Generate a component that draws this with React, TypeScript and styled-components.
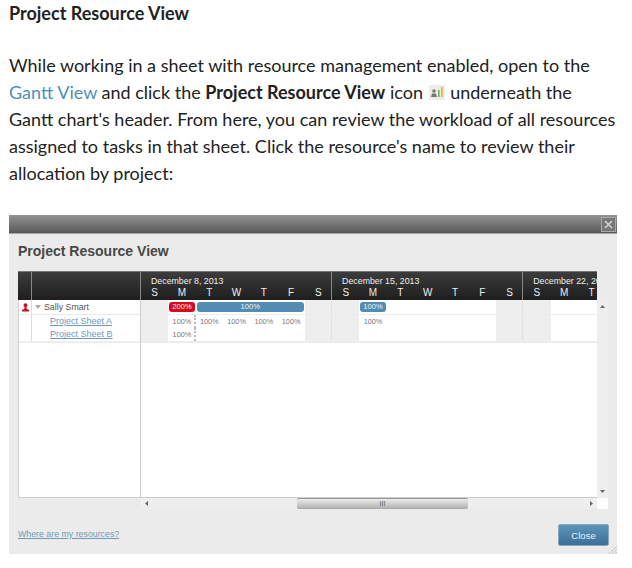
import React from "react";
import styled, { createGlobalStyle } from "styled-components";

const GlobalStyle = createGlobalStyle`
    html, body {
        margin: 0;
        background: white;
    }
`;

const Page = styled.div`
    width: 632px;
    height: 568px;
    overflow: hidden;
    box-sizing: border-box;
    padding: 0 0 0 9px;
    font-family: "Lato", "Liberation Sans", sans-serif;
    color: #222;
`;

const Heading = styled.h2`
    margin: 0;
    padding-top: 3px;
    font-size: 18px;
    line-height: 20px;
    font-weight: 700;
`;

const Paragraph = styled.p`
    margin: 29px 0 0;
    width: 620px;
    font-size: 18px;
    line-height: 27px;
    white-space: nowrap;
`;

const DocLink = styled.span`
    color: #4f8fb5;
`;

const InlineIcon = styled.svg`
    width: 16px;
    height: 15px;
    vertical-align: -1px;
    margin: 0 1px;
`;

const Dialog = styled.div`
    position: relative;
    margin-top: 28px;
    width: 608px;
    height: 339px;
    background: #ebebeb;
    font-family: "Liberation Sans", Arial, sans-serif;
    display: flex;
    flex-direction: column;
`;

const TitleBar = styled.div`
    height: 18px;
    flex: none;
    display: flex;
    justify-content: flex-end;
    align-items: center;
    background: linear-gradient(#939393, #595959);
    border-bottom: 1px solid #a3a3a3;
`;

const CloseX = styled.div`
    width: 13px;
    height: 13px;
    margin-right: 1px;
    display: flex;
    align-items: center;
    justify-content: center;
    background: #777;
    border: 1px solid #a8a8a8;
`;

const DialogBody = styled.div`
    flex: 1;
    padding: 8px 0 0 9px;
    display: flex;
    flex-direction: column;
`;

const DialogTitle = styled.div`
    font-size: 14px;
    line-height: 18px;
    font-weight: 700;
    color: #474747;
    margin-bottom: 11px;
`;

const HeaderRow = styled.div`
    display: flex;
    width: 579px;
    height: 29px;
    background: linear-gradient(#3c3c3c, #1e1e1e);
    border-top: 1px solid #777;
    box-sizing: border-box;
`;

const IconHead = styled.div`
    width: 13px;
    flex: none;
    border-right: 1px solid #888;
`;

const NameHead = styled.div`
    width: 108px;
    flex: none;
    border-right: 1px solid #888;
`;

const WeekStrip = styled.div`
    flex: 1;
    display: flex;
    overflow: hidden;
`;

const Week = styled.div`
    width: 191.1px;
    flex: none;
    box-sizing: border-box;
    border-right: 1px solid #888;
    color: #eee;
`;

const WeekDate = styled.div`
    padding: 4px 0 0 10px;
    font-size: 8.8px;
    line-height: 11px;
    white-space: nowrap;
`;

const DayRow = styled.div`
    display: grid;
    grid-template-columns: repeat(7, 27.3px);
    font-size: 10px;
    line-height: 12px;
    text-align: center;
`;

const BodyArea = styled.div`
    display: flex;
    height: 198px;
`;

const TableBody = styled.div`
    width: 579px;
    display: flex;
    background: white;
    box-sizing: border-box;
    border-left: 1px solid #d4d4d4;
    border-bottom: 1px solid #ccc;
`;

const LeftPane = styled.div`
    width: 122px;
    flex: none;
    box-sizing: border-box;
    border-right: 1px solid #ccc;
`;

const ResourceRow = styled.div`
    height: 15px;
    display: flex;
    align-items: center;
    box-sizing: border-box;
    border-bottom: 1px solid #eaeaea;
    font-size: 8.8px;
    color: #555;
`;

const RowIcon = styled.div`
    width: 13px;
    height: 100%;
    flex: none;
    display: flex;
    align-items: center;
    justify-content: center;
    border-right: 1px solid #ddd;
    box-sizing: border-box;
`;

const Caret = styled.svg`
    width: 6px;
    height: 4px;
    margin: 0 3px 0 3px;
`;

const ProjectRows = styled.div`
    height: 28px;
    box-sizing: border-box;
    border-bottom: 2px solid #eee;
    padding-left: 13px;
    background: linear-gradient(#ddd, #ddd) 12px 0 / 1px 100% no-repeat;
`;

const ProjectLink = styled.div`
    height: 13.4px;
    line-height: 13px;
    padding-left: 18px;
    font-size: 9px;
    color: #6d9ab8;
    text-decoration: underline;
`;

const ChartPane = styled.div`
    flex: 1;
    overflow: hidden;
`;

const Stripes = styled.div`
    width: 456px;
    background: repeating-linear-gradient(
        90deg,
        #eeeeee 0,
        #eeeeee 27.3px,
        white 27.3px,
        white 163.8px,
        #eeeeee 163.8px,
        #eeeeee 190.1px,
        #e2e2e2 190.1px,
        #e2e2e2 191.1px
    );
`;

const ChartGrid = styled.div<{ $height: number; $border: number }>`
    display: grid;
    grid-template-columns: repeat(17, 27.3px);
    grid-auto-rows: 13px;
    height: ${(p) => p.$height}px;
    align-content: start;
    box-sizing: border-box;
    border-bottom: ${(p) => p.$border}px solid #ececec;
`;

const Bar = styled.div<{ $col: number; $span: number; $red?: boolean }>`
    grid-column: ${(p) => p.$col} / span ${(p) => p.$span};
    margin: 2px 1px 1px 1px;
    height: 10px;
    border-radius: 3px;
    background: ${(p) => (p.$red ? "#d8091f" : "#538cb1")};
    color: #f2f2f2;
    font-size: 7.6px;
    line-height: 10px;
    text-align: center;
`;

const Percent = styled.div<{ $col: number; $row: number; $dashed?: boolean }>`
    grid-column: ${(p) => p.$col};
    grid-row: ${(p) => p.$row};
    font-size: 7.3px;
    line-height: 13px;
    text-align: center;
    color: #777;
    ${(p) => (p.$dashed ? "border-right: 2px dotted #bbb; padding-left: 2px;" : "")}
`;

const VerticalTrack = styled.div`
    width: 11px;
    flex: none;
    display: flex;
    flex-direction: column;
    justify-content: space-between;
    align-items: center;
    padding: 4px 0;
    box-sizing: border-box;
    background: #eeeeee;
`;

const HorizontalArea = styled.div`
    display: flex;
    height: 11px;
    width: 590px;
`;

const ScrollGap = styled.div`
    width: 123px;
    flex: none;
`;

const HorizontalTrack = styled.div`
    width: 456px;
    flex: none;
    display: flex;
    align-items: center;
    background: #eeeeee;
`;

const ArrowSlot = styled.div`
    width: 11px;
    flex: none;
    display: flex;
    justify-content: center;
`;

const TrackSpace = styled.div<{ $w: number }>`
    width: ${(p) => p.$w}px;
    flex: none;
`;

const Thumb = styled.div`
    width: 171px;
    height: 11px;
    flex: none;
    box-sizing: border-box;
    border-radius: 2px;
    border-top: 1px solid #999;
    border-bottom: 1px solid #aaa;
    background: linear-gradient(#ececec, #b4b4b4);
    color: #555;
    font-size: 7px;
    line-height: 9px;
    text-align: center;
`;

const ScrollCorner = styled.div`
    width: 11px;
    flex: none;
    background: white;
`;

const Footer = styled.div`
    flex: 1;
    display: flex;
    align-items: flex-start;
    justify-content: space-between;
    width: 591px;
    padding-top: 15px;
`;

const HelpLink = styled.div`
    margin-top: 4px;
    font-size: 8.8px;
    line-height: 12px;
    color: #6d9ab8;
    text-decoration: underline;
`;

const CloseButton = styled.div`
    width: 51px;
    height: 22px;
    box-sizing: border-box;
    border: 1px solid #8aa6b8;
    border-radius: 2px;
    background: linear-gradient(#5c95b8, #3c6f96);
    color: #e2f2f8;
    font-size: 9.6px;
    line-height: 21px;
    text-align: center;
`;

const ResizeGrip = styled.svg`
    position: absolute;
    right: 0;
    bottom: 0;
    width: 8px;
    height: 8px;
`;

const days = ["S", "M", "T", "W", "T", "F", "S"];
const weeks = [
    { label: "December 8, 2013", dayCount: 7 },
    { label: "December 15, 2013", dayCount: 7 },
    { label: "December 22, 2013", dayCount: 3 },
];

function Arrow(props: { dir: "up" | "down" | "left" | "right" }) {
    const points = {
        up: "0,4 2.5,1 5,4",
        down: "0,1 5,1 2.5,4",
        left: "4,0 4,5 1,2.5",
        right: "1,0 1,5 4,2.5",
    }[props.dir];
    return (
        <svg width="5" height="5" viewBox="0 0 5 5">
            <polygon points={points} fill="#666" />
        </svg>
    );
}

export default function App() {
    return (
        <React.Fragment>
            <GlobalStyle />
            <Page>
                <Heading>Project Resource View</Heading>
                <Paragraph>
                    While working in a sheet with resource management enabled, open to the
                    <br />
                    <DocLink>Gantt View</DocLink> and click the <b>Project Resource View</b> icon{" "}
                    <InlineIcon viewBox="0 0 16 15">
                        <rect width="16" height="15" fill="#ececec" />
                        <circle cx="5" cy="6" r="1.8" fill="#777" />
                        <path d="M2 12 L3 8.5 H7 L8 12 Z" fill="#777" />
                        <rect x="9" y="5" width="1.6" height="7" fill="#6fb04a" />
                        <rect x="12" y="2" width="1.8" height="10" fill="#f0b429" />
                    </InlineIcon>{" "}
                    underneath the
                    <br />
                    Gantt chart's header. From here, you can review the workload of all resources
                    <br />
                    assigned to tasks in that sheet. Click the resource's name to review their
                    <br />
                    allocation by project:
                </Paragraph>
                <Dialog>
                    <TitleBar>
                        <CloseX>
                            <svg width="9" height="9" viewBox="0 0 9 9">
                                <path d="M1 1 L8 8 M8 1 L1 8" stroke="#d0d0d0" strokeWidth="1.6" />
                            </svg>
                        </CloseX>
                    </TitleBar>
                    <DialogBody>
                        <DialogTitle>Project Resource View</DialogTitle>
                        <HeaderRow>
                            <IconHead />
                            <NameHead />
                            <WeekStrip>
                                {weeks.map((w) => (
                                    <Week key={w.label}>
                                        <WeekDate>{w.label}</WeekDate>
                                        <DayRow>
                                            {days.slice(0, w.dayCount).map((d, i) => (
                                                <span key={i}>{d}</span>
                                            ))}
                                        </DayRow>
                                    </Week>
                                ))}
                            </WeekStrip>
                        </HeaderRow>
                        <BodyArea>
                            <TableBody>
                                <LeftPane>
                                    <ResourceRow>
                                        <RowIcon>
                                            <svg width="7" height="9" viewBox="0 0 7 9">
                                                <circle cx="3.5" cy="2.2" r="1.9" fill="#c8101e" />
                                                <path d="M2.6 4 H4.4 L4.8 6 L7 7 V8.5 H0 V7 L2.2 6 Z" fill="#c8101e" />
                                            </svg>
                                        </RowIcon>
                                        <Caret viewBox="0 0 6 4">
                                            <polygon points="0,0 6,0 3,4" fill="#aaa" />
                                        </Caret>
                                        Sally Smart
                                    </ResourceRow>
                                    <ProjectRows>
                                        <ProjectLink>Project Sheet A</ProjectLink>
                                        <ProjectLink>Project Sheet B</ProjectLink>
                                    </ProjectRows>
                                </LeftPane>
                                <ChartPane>
                                    <Stripes>
                                        <ChartGrid $height={15} $border={1}>
                                            <Bar $col={2} $span={1} $red>200%</Bar>
                                            <Bar $col={3} $span={4}>100%</Bar>
                                            <Bar $col={9} $span={1}>100%</Bar>
                                        </ChartGrid>
                                        <ChartGrid $height={28} $border={2}>
                                            <Percent $col={2} $row={1} $dashed>100%</Percent>
                                            <Percent $col={3} $row={1}>100%</Percent>
                                            <Percent $col={4} $row={1}>100%</Percent>
                                            <Percent $col={5} $row={1}>100%</Percent>
                                            <Percent $col={6} $row={1}>100%</Percent>
                                            <Percent $col={9} $row={1}>100%</Percent>
                                            <Percent $col={2} $row={2} $dashed>100%</Percent>
                                        </ChartGrid>
                                    </Stripes>
                                </ChartPane>
                            </TableBody>
                            <VerticalTrack>
                                <Arrow dir="up" />
                                <Arrow dir="down" />
                            </VerticalTrack>
                        </BodyArea>
                        <HorizontalArea>
                            <ScrollGap />
                            <HorizontalTrack>
                                <ArrowSlot>
                                    <Arrow dir="left" />
                                </ArrowSlot>
                                <TrackSpace $w={145} />
                                <Thumb>III</Thumb>
                                <TrackSpace $w={118} />
                                <ArrowSlot>
                                    <Arrow dir="right" />
                                </ArrowSlot>
                            </HorizontalTrack>
                            <ScrollCorner />
                        </HorizontalArea>
                        <Footer>
                            <HelpLink>Where are my resources?</HelpLink>
                            <CloseButton>Close</CloseButton>
                        </Footer>
                    </DialogBody>
                    <ResizeGrip viewBox="0 0 8 8">
                        <path d="M0 8 L8 0 M3 8 L8 3 M6 8 L8 6" stroke="#bbb" strokeWidth="0.8" />
                    </ResizeGrip>
                </Dialog>
            </Page>
        </React.Fragment>
    );
}
